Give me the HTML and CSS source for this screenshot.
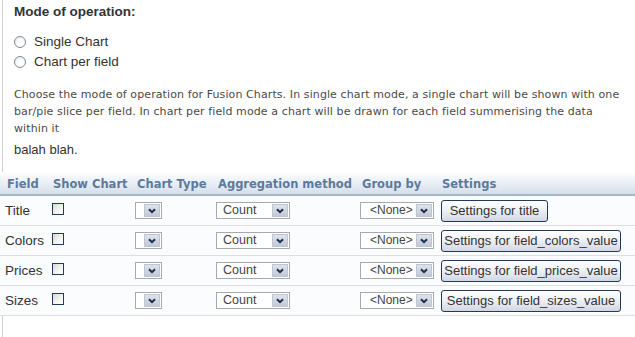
FILE: index.html
```html
<!DOCTYPE html>
<html>
<head>
<meta charset="utf-8">
<link rel="stylesheet" href="styles.css">
</head>
<body>
<div class="page">
  <div class="top">
    <h3 class="title">Mode of operation:</h3>
    <div class="radios">
      <label class="opt"><input type="radio" name="mode" class="radio"><span>Single Chart</span></label>
      <label class="opt"><input type="radio" name="mode" class="radio"><span>Chart per field</span></label>
    </div>
    <p class="desc">Choose the mode of operation for Fusion Charts. In single chart mode, a single chart will be shown with one bar/pie slice per field. In chart per field mode a chart will be drawn for each field summerising the data within it</p>
    <p class="note">balah blah.</p>
  </div>
  <table class="grid">
    <colgroup>
      <col class="c1"><col class="c2"><col class="c3"><col class="c4"><col class="c5"><col class="c6">
    </colgroup>
    <thead>
      <tr>
        <th>Field</th><th>Show Chart</th><th>Chart Type</th><th>Aggregation method</th><th>Group by</th><th>Settings</th>
      </tr>
    </thead>
    <tbody>
      <tr>
        <td>Title</td>
        <td><input type="checkbox" class="check"></td>
        <td><span class="sel sel-empty"><span class="sel-text"></span><span class="sel-arrow"><svg width="8" height="6" viewBox="0 0 8 6"><path d="M1 1.2 L4 4.2 L7 1.2" fill="none" stroke="#1d2c4e" stroke-width="2"/></svg></span></span></td>
        <td><span class="sel sel-wide"><span class="sel-text">Count</span><span class="sel-arrow"><svg width="8" height="6" viewBox="0 0 8 6"><path d="M1 1.2 L4 4.2 L7 1.2" fill="none" stroke="#1d2c4e" stroke-width="2"/></svg></span></span></td>
        <td><span class="sel sel-wide"><span class="sel-text sel-none">&lt;None&gt;</span><span class="sel-arrow"><svg width="8" height="6" viewBox="0 0 8 6"><path d="M1 1.2 L4 4.2 L7 1.2" fill="none" stroke="#1d2c4e" stroke-width="2"/></svg></span></span></td>
        <td><button class="btn btn-title">Settings for title</button></td>
      </tr>
      <tr>
        <td>Colors</td>
        <td><input type="checkbox" class="check"></td>
        <td><span class="sel sel-empty"><span class="sel-text"></span><span class="sel-arrow"><svg width="8" height="6" viewBox="0 0 8 6"><path d="M1 1.2 L4 4.2 L7 1.2" fill="none" stroke="#1d2c4e" stroke-width="2"/></svg></span></span></td>
        <td><span class="sel sel-wide"><span class="sel-text">Count</span><span class="sel-arrow"><svg width="8" height="6" viewBox="0 0 8 6"><path d="M1 1.2 L4 4.2 L7 1.2" fill="none" stroke="#1d2c4e" stroke-width="2"/></svg></span></span></td>
        <td><span class="sel sel-wide"><span class="sel-text sel-none">&lt;None&gt;</span><span class="sel-arrow"><svg width="8" height="6" viewBox="0 0 8 6"><path d="M1 1.2 L4 4.2 L7 1.2" fill="none" stroke="#1d2c4e" stroke-width="2"/></svg></span></span></td>
        <td><button class="btn btn-wide">Settings for field_colors_value</button></td>
      </tr>
      <tr>
        <td>Prices</td>
        <td><input type="checkbox" class="check"></td>
        <td><span class="sel sel-empty"><span class="sel-text"></span><span class="sel-arrow"><svg width="8" height="6" viewBox="0 0 8 6"><path d="M1 1.2 L4 4.2 L7 1.2" fill="none" stroke="#1d2c4e" stroke-width="2"/></svg></span></span></td>
        <td><span class="sel sel-wide"><span class="sel-text">Count</span><span class="sel-arrow"><svg width="8" height="6" viewBox="0 0 8 6"><path d="M1 1.2 L4 4.2 L7 1.2" fill="none" stroke="#1d2c4e" stroke-width="2"/></svg></span></span></td>
        <td><span class="sel sel-wide"><span class="sel-text sel-none">&lt;None&gt;</span><span class="sel-arrow"><svg width="8" height="6" viewBox="0 0 8 6"><path d="M1 1.2 L4 4.2 L7 1.2" fill="none" stroke="#1d2c4e" stroke-width="2"/></svg></span></span></td>
        <td><button class="btn btn-wide">Settings for field_prices_value</button></td>
      </tr>
      <tr>
        <td>Sizes</td>
        <td><input type="checkbox" class="check"></td>
        <td><span class="sel sel-empty"><span class="sel-text"></span><span class="sel-arrow"><svg width="8" height="6" viewBox="0 0 8 6"><path d="M1 1.2 L4 4.2 L7 1.2" fill="none" stroke="#1d2c4e" stroke-width="2"/></svg></span></span></td>
        <td><span class="sel sel-wide"><span class="sel-text">Count</span><span class="sel-arrow"><svg width="8" height="6" viewBox="0 0 8 6"><path d="M1 1.2 L4 4.2 L7 1.2" fill="none" stroke="#1d2c4e" stroke-width="2"/></svg></span></span></td>
        <td><span class="sel sel-wide"><span class="sel-text sel-none">&lt;None&gt;</span><span class="sel-arrow"><svg width="8" height="6" viewBox="0 0 8 6"><path d="M1 1.2 L4 4.2 L7 1.2" fill="none" stroke="#1d2c4e" stroke-width="2"/></svg></span></span></td>
        <td><button class="btn btn-wide">Settings for field_sizes_value</button></td>
      </tr>
    </tbody>
  </table>
  <div class="bottom"></div>
</div>
</body>
</html>
```

FILE: styles.css
```css
html, body {
  margin: 0;
  height: 100%;
}

body {
  font-family: "Liberation Sans", Arial, sans-serif;
  font-size: 13px;
  color: #333;
  background: #fff;
}

.page {
  display: flex;
  flex-direction: column;
  min-height: 100vh;
}

.top {
  margin-left: 2px;
  border-left: 1px solid #cfcfcf;
  padding: 4px 0 14px 11px;
}

.title {
  margin: 0 0 12px;
  font-size: 13.5px;
  line-height: 16px;
  font-weight: bold;
  color: #333;
}

.opt {
  display: flex;
  align-items: center;
  gap: 8px;
  height: 20px;
  line-height: 20px;
  font-size: 13.5px;
  color: #333;
}

.radio {
  appearance: none;
  -webkit-appearance: none;
  margin: 0;
  width: 12px;
  height: 12px;
  box-sizing: border-box;
  border-radius: 50%;
  border: 1px solid #7d8c9b;
  background: radial-gradient(circle at 60% 65%, #ffffff 35%, #dde1e8 100%);
}

.desc {
  margin: 13.5px 0 0;
  font-family: "DejaVu Sans", Verdana, sans-serif;
  font-size: 11px;
  letter-spacing: 0.1px;
  line-height: 17px;
  color: #4a4a4a;
  max-width: 611px;
}

.note {
  margin: 5.5px 0 0;
  line-height: 16px;
  color: #333;
}

.grid {
  width: 100%;
  border-collapse: separate;
  border-spacing: 0;
  table-layout: fixed;
}

.c1 { width: 49px; }
.c2 { width: 84px; }
.c3 { width: 81px; }
.c4 { width: 144px; }
.c5 { width: 80px; }

.grid th {
  height: 21px;
  padding: 1px 0 0 4px;
  text-align: left;
  white-space: nowrap;
  font-family: "DejaVu Sans", Verdana, sans-serif;
  font-size: 11.5px;
  font-weight: bold;
  color: #5d7a9c;
  background: linear-gradient(#fdfeff, #d5dfeb);
  border-bottom: 2px solid #a8b5c3;
}

.grid th:first-child {
  padding-left: 7px;
}

.grid td {
  height: 29px;
  padding: 0 0 0 2px;
  vertical-align: middle;
  white-space: nowrap;
  background: #fbfcfd;
  border-bottom: 1px solid #dedede;
  font-size: 13.5px;
  color: #333;
}

.grid td:first-child {
  padding-left: 5px;
}

.check {
  appearance: none;
  -webkit-appearance: none;
  display: block;
  margin: 0 0 4px 1px;
  width: 12px;
  height: 12px;
  box-sizing: border-box;
  border: 1px solid #1f3c5a;
  background: linear-gradient(135deg, #d9d9d3, #f4f4f1 60%, #ffffff);
}

.sel {
  display: flex;
  align-items: stretch;
  height: 17px;
  box-sizing: border-box;
  border: 1px solid #a6aab0;
  background: #fff;
  padding: 1px;
}

.sel-empty { width: 27px; }
.sel-wide { width: 74px; }

.sel-text {
  flex: 1;
  padding-left: 5px;
  font-size: 12.5px;
  line-height: 13px;
  color: #444;
}

.sel-none {
  padding-left: 8px;
  font-size: 12px;
}

.sel-arrow {
  width: 16px;
  box-sizing: border-box;
  border: 1px solid #bfc5d2;
  background: linear-gradient(#e0e3eb, #c2c9d7);
  display: flex;
  align-items: center;
  justify-content: center;
}

.sel-arrow svg {
  display: block;
}

.btn {
  display: block;
  margin-left: 1px;
  height: 22px;
  box-sizing: border-box;
  padding: 0 6px;
  border: 1px solid #213a58;
  border-radius: 3px;
  background: linear-gradient(#ffffff, #f0f1f5 45%, #d2d6e3);
  font-family: "Liberation Sans", Arial, sans-serif;
  font-size: 13px;
  color: #333;
  white-space: nowrap;
  text-align: center;
}

.btn-title { width: 107px; }

.btn-wide {
  width: 180px;
  padding: 0;
  overflow: hidden;
}

.bottom {
  flex: 1;
  margin-left: 2px;
  border-left: 1px solid #cfcfcf;
}
```
